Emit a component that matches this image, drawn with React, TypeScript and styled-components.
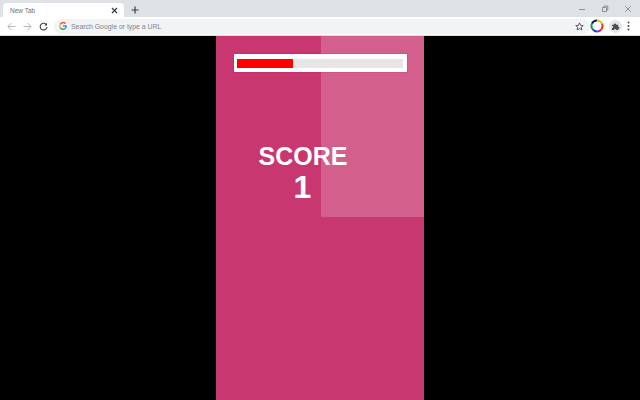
import React from "react";
import styled, { createGlobalStyle } from "styled-components";

const Global = createGlobalStyle`
  html, body { margin: 0; padding: 0; width: 640px; height: 400px; overflow: hidden; background: #000; }
  body { font-family: "Liberation Sans", Arial, sans-serif; }
`;
const Page = styled.div`
  width: 640px; height: 400px; display: flex; flex-direction: column; background: #000;
`;
const TabStrip = styled.div`
  height: 17px; background: #dee1e6; display: flex; align-items: flex-end; flex: none; padding-left: 3px;
`;
const Tab = styled.div`
  width: 121px; height: 14px; background: #fff; border-radius: 4px 4px 0 0; display: flex;
  align-items: center; justify-content: space-between; padding: 0 6px 0 7px; box-sizing: border-box;
  font-size: 6.5px; color: #6f7377;
`;
const NewTab = styled.div`
  width: 10px; height: 10px; margin-left: 6px; margin-bottom: 2px; display: flex; color: #3c4043;
`;
const WindowControls = styled.div`
  margin-left: auto; display: flex; align-self: center; gap: 15px; padding-right: 8px; color: #7b7e83;
`;
const Toolbar = styled.div`
  height: 18px; background: #fff; display: flex; align-items: center; flex: none; padding: 0 5px 0 7px;
  border-bottom: 1px solid #d8dade; box-sizing: content-box;
`;
const NavIcons = styled.div`
  display: flex; gap: 7px; align-items: center;
`;
const Omnibox = styled.div`
  width: 536px; height: 15px; margin-left: 6px; background: #f1f3f4; border-radius: 8px; display: flex;
  align-items: center; padding: 0 6px 0 5px; box-sizing: border-box; font-size: 6.9px; color: #80848a; flex: none;
`;
const OmniText = styled.span`
  margin-left: 4px; white-space: nowrap;
`;
const Star = styled.div`
  margin-left: auto; display: flex;
`;
const ToolbarRight = styled.div`
  display: flex; align-items: center; gap: 4px;
`;
const ExtButton = styled.div`
  width: 13px; height: 13px; border-radius: 50%; background: #e4e5e7; display: flex;
  align-items: center; justify-content: center; margin: 0 1px;
`;
const Viewport = styled.div`
  flex: 1; display: flex; justify-content: center; background: #000; min-height: 0;
`;
const Board = styled.div`
  position: relative; width: 208px; background: #c93770; display: flex; flex-direction: column;
`;
const Tile = styled.div`
  position: absolute; right: 0; top: 0; width: 103px; height: 181px; background: rgba(255,255,255,0.2);
`;
const Meter = styled.div`
  position: relative; margin: 18px 0 0 18px; width: 173px; height: 18px; background: #fff; padding: 5px 3px 4px 3px;
  box-sizing: border-box; box-shadow: 0 0 1px rgba(190,0,90,.7);
`;
const MeterTrack = styled.div`
  height: 9px; width: 166px; background: #e6e6e6;
`;
const MeterFill = styled.div`
  height: 100%; background: #ff0000;
`;
const Score = styled.div`
  position: relative; margin: 70px 0 0 0; width: 174px; text-align: center; color: #fff; font-weight: 700;
`;
const ScoreLabel = styled.div`
  font-size: 25px; line-height: 29px;
`;
const ScoreValue = styled.div`
  font-size: 32px; line-height: 33px; margin-left: -1px;
`;

const Ic = { fill: "none", stroke: "currentColor", strokeWidth: 1.2 } as const;

export default function App() {
  return (
    <Page>
      <Global />
      <TabStrip>
        <Tab>
          <span>New Tab</span>
          <svg width="7" height="7" viewBox="0 0 7 7" fill="none" stroke="#3c4043" strokeWidth="1.3"><path d="M1 1l5 5M6 1l-5 5" /></svg>
        </Tab>
        <NewTab>
          <svg width="10" height="10" viewBox="0 0 10 10" {...Ic}><path d="M5 1.5v7M1.5 5h7" /></svg>
        </NewTab>
        <WindowControls>
          <svg width="8" height="8" viewBox="0 0 8 8" fill="none" stroke="currentColor" strokeWidth="0.8"><path d="M1 4.5h6" /></svg>
          <svg width="8" height="8" viewBox="0 0 8 8" fill="none" stroke="currentColor" strokeWidth="0.8"><path d="M1.5 2.5h4v4h-4zM3 2.5V1h3.8v4H5.5" /></svg>
          <svg width="8" height="8" viewBox="0 0 8 8" fill="none" stroke="currentColor" strokeWidth="0.8"><path d="M1.2 1.2l5.6 5.6M6.8 1.2L1.2 6.8" /></svg>
        </WindowControls>
      </TabStrip>
      <Toolbar>
        <NavIcons>
          <svg width="9" height="9" viewBox="0 0 9 9" fill="none" stroke="#b4b7bb" strokeWidth="1"><path d="M8.5 4.5H1M4.3 1L.9 4.5 4.3 8" /></svg>
          <svg width="9" height="9" viewBox="0 0 9 9" fill="none" stroke="#b4b7bb" strokeWidth="1"><path d="M.5 4.5H8M4.7 1l3.4 3.5L4.7 8" /></svg>
          <svg width="9" height="9" viewBox="0 0 9 9" fill="none" stroke="#3c4043" strokeWidth="1.1"><path d="M7.6 3A3.4 3.4 0 1 0 8 5" /><path d="M8 .8v2.7H5.3" fill="#3c4043" stroke="none" /></svg>
        </NavIcons>
        <Omnibox>
          <svg width="8" height="8" viewBox="0 0 8 8" fill="none" strokeWidth="1.4">
            <path d="M6.5 1.6A3.2 3.2 0 0 0 1.3 2.4" stroke="#ea4335" />
            <path d="M1.3 2.4a3.2 3.2 0 0 0 0 3.2" stroke="#fbbc05" />
            <path d="M1.3 5.6a3.2 3.2 0 0 0 5 .8" stroke="#34a853" />
            <path d="M6.3 6.4A3.2 3.2 0 0 0 7.2 4H4" stroke="#4285f4" />
          </svg>
          <OmniText>Search Google or type a URL</OmniText>
          <Star>
            <svg width="9" height="9" viewBox="0 0 10 10" fill="none" stroke="#4a4d52" strokeWidth="1"><path d="M5 1l1.2 2.7 2.9.3-2.2 1.9.7 2.9L5 7.3 2.4 8.8l.7-2.9L.9 4l2.9-.3z" /></svg>
          </Star>
        </Omnibox>
        <ToolbarRight>
          <svg width="14" height="14" viewBox="0 0 14 14" fill="none" strokeWidth="2">
            <path d="M7 1.5A5.5 5.5 0 0 1 12 4.7" stroke="#e8c60a" />
            <path d="M12 4.7A5.5 5.5 0 0 1 11.4 10.3" stroke="#e03020" />
            <path d="M11.4 10.3A5.5 5.5 0 0 1 7 12.5" stroke="#c026a0" />
            <path d="M7 12.5A5.5 5.5 0 0 1 2.4 10" stroke="#2040d0" />
            <path d="M2.4 10A5.5 5.5 0 0 1 2 4.5" stroke="#10a040" />
            <path d="M2 4.5A5.5 5.5 0 0 1 7 1.5" stroke="#0c1c50" />
          </svg>
          <ExtButton>
            <svg width="9" height="9" viewBox="0 0 10 10" fill="#4a4d52"><path d="M1 3h2.2a1.3 1.3 0 1 1 2.6 0H8v2.2a1.3 1.3 0 1 1 0 2.6V9H5.8a1.3 1.3 0 1 0-2.6 0H1V6.8a1.3 1.3 0 1 0 0-2.6z" /></svg>
          </ExtButton>
          <svg width="3" height="10" viewBox="0 0 3 10" fill="#4a4d52"><circle cx="1.5" cy="1.5" r="1" /><circle cx="1.5" cy="5" r="1" /><circle cx="1.5" cy="8.5" r="1" /></svg>
        </ToolbarRight>
      </Toolbar>
      <Viewport>
        <Board>
          <Tile />
          <Meter>
            <MeterTrack>
              <MeterFill style={{ width: `${(56 / 166) * 100}%` }} />
            </MeterTrack>
          </Meter>
          <Score>
            <ScoreLabel>SCORE</ScoreLabel>
            <ScoreValue>1</ScoreValue>
          </Score>
        </Board>
      </Viewport>
    </Page>
  );
}
